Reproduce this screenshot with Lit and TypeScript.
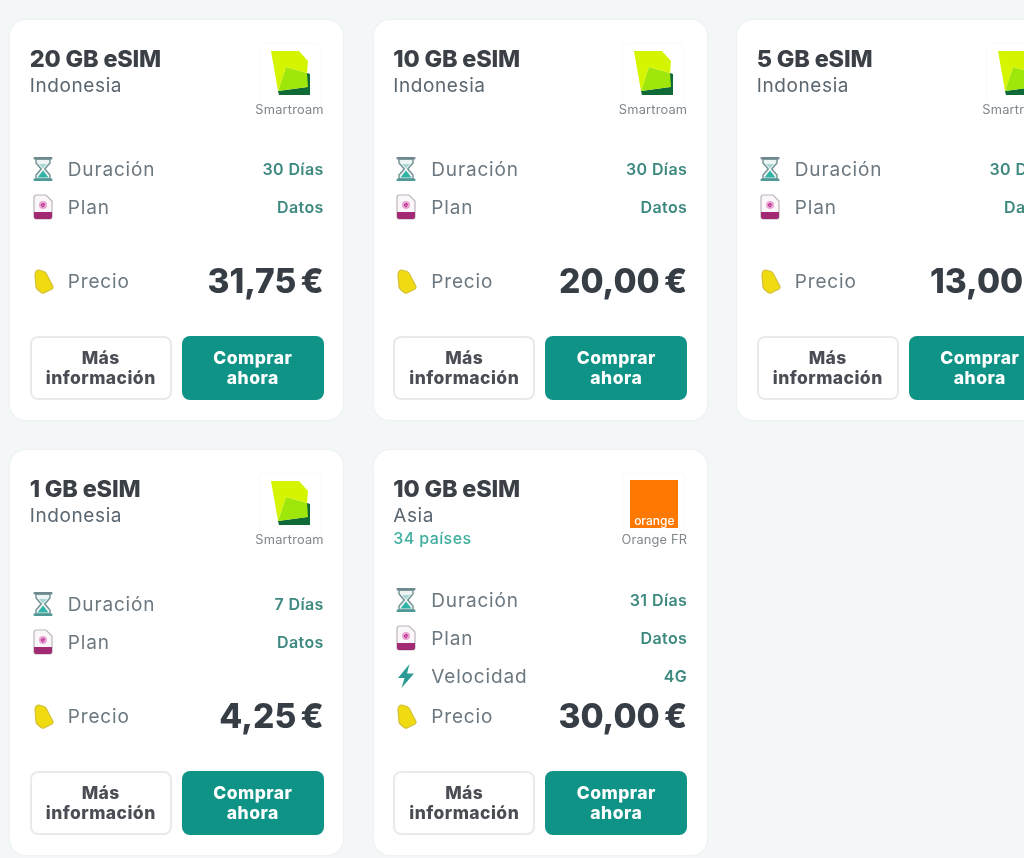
import { LitElement, html, css, svg } from 'lit';
import { customElement } from 'lit/decorators.js';

interface Plan {
  title: string;
  region: string;
  countries?: string;
  brand: 'smartroam' | 'orange';
  days: string;
  speed?: string;
  price: string;
}

const PLANS: Plan[] = [
  { title: '20 GB eSIM', region: 'Indonesia', brand: 'smartroam', days: '30 Días', price: '31,75 €' },
  { title: '10 GB eSIM', region: 'Indonesia', brand: 'smartroam', days: '30 Días', price: '20,00 €' },
  { title: '5 GB eSIM', region: 'Indonesia', brand: 'smartroam', days: '30 Días', price: '13,00 €' },
  { title: '1 GB eSIM', region: 'Indonesia', brand: 'smartroam', days: '7 Días', price: '4,25 €' },
  { title: '10 GB eSIM', region: 'Asia', countries: '34 países', brand: 'orange', days: '31 Días', speed: '4G', price: '30,00 €' },
];

const hourglass = svg`<svg width="24" height="28" viewBox="0 0 24 28">
  <path d="M5 4h14v4l-5.2 6 5.2 6v4H5v-4l5.2-6L5 8z" fill="#eef4f4" stroke="#6f8f92" stroke-width="1.4"/>
  <path d="M8 9h8l-4 4.5z" fill="#a9d8d4"/>
  <path d="M12 15.5l5.5 7h-11z" fill="#2fb3a6"/>
  <rect x="2.5" y="2" width="19" height="2.6" rx="1" fill="#6f8a8e"/>
  <rect x="2.5" y="23.4" width="19" height="2.6" rx="1" fill="#4f9a96"/>
</svg>`;

const simCard = svg`<svg width="20" height="26" viewBox="0 0 20 26">
  <path d="M3.5 1H13l6 6v15.500A2.500 2.500 0 0 1 16.500 25h-13A2.500 2.500 0 0 1 1 22.500v-19A2.500 2.500 0 0 1 3.500 1z" fill="#fbf6f9" stroke="#b9b6bb" stroke-width="1.200"/>
  <path d="M1 18h18v4.500a2.500 2.500 0 0 1-2.500 2.500h-13A2.500 2.500 0 0 1 1 22.500z" fill="#a12a72"/>
  <circle cx="10" cy="11" r="4" fill="#e9a6d3"/>
  <path d="M8.400 11h3.200a1.600 1.600 0 1 0-.5 1.300" fill="none" stroke="#b5248a" stroke-width="1"/>
</svg>`;

const bolt = svg`<svg width="20" height="26" viewBox="0 0 20 26">
  <path d="M13.500 1L2 15h6.500L5.500 25 18 10.500h-7z" fill="#2a9c95"/>
</svg>`;

const tag = svg`<svg width="24" height="28" viewBox="0 0 24 28">
  <path d="M4 8Q4 3 8 3L13 4.500Q14.500 5 15.500 7L22 19.500Q22.500 21 21 22L13 26Q11.500 26.500 10 25.500L6.500 22.500Q5.500 21.500 5 20z" fill="#f0da10" stroke="#d3c03c" stroke-width="1.200" stroke-linejoin="round"/>
</svg>`;

const smartroamLogo = svg`<svg width="60" height="60" viewBox="0 0 60 60">
  <path d="M47 29l3 1v21H19l-1-4 29-4z" fill="#0f6a38"/>
  <path d="M26 23l21 6 1 14-30 4z" fill="#9fe60a"/>
  <path d="M11 7h28l9 10-1 12-21-6-8 24z" fill="#d5f400"/>
</svg>`;

@customElement('app-root')
export class AppRoot extends LitElement {
  static styles = css`
    :host {
      display: block;
      width: 1024px;
      height: 858px;
      overflow: hidden;
      background: #f4f7f8;
      font-family: Inter, 'Liberation Sans', sans-serif;
    }

    .grid {
      display: grid;
      grid-template-columns: repeat(3, 333px);
      grid-template-rows: 400px 405px;
      gap: 30px 30.5px;
      padding: 20px 0 20px 10px;
      width: 1100px;
      filter: blur(0.6px);
    }

    .card {
      display: flex;
      flex-direction: column;
      padding: 20px 19.25px 20px 19.75px;
      background: #fff;
      border-radius: 16px;
      box-shadow: 0 0 3px rgba(60, 80, 90, 0.08);
    }

    .head {
      display: flex;
      justify-content: space-between;
      align-items: flex-start;
    }

    .title {
      margin: 5px 0 0;
      color: #3b4046;
      font-size: 23.5px;
      line-height: 27px;
      font-weight: 800;
      letter-spacing: -0.2px;
    }

    .region {
      margin-top: 1px;
      color: #5a6670;
      font-size: 19px;
      line-height: 26px;
      letter-spacing: 0.6px;
    }

    .countries {
      color: #3fae9f;
      font-size: 16px;
      line-height: 19px;
      font-weight: 500;
      letter-spacing: 0.4px;
    }

    .brand {
      display: flex;
      flex-direction: column;
      align-items: center;
      margin-top: 4px;
    }

    .logo {
      display: flex;
      align-items: center;
      justify-content: center;
      width: 60px;
      height: 60px;
      border-radius: 4px;
      box-shadow: 0 0 2px rgba(60, 80, 90, 0.1);
    }

    .orange-mark {
      display: flex;
      align-items: flex-end;
      justify-content: center;
      box-sizing: border-box;
      width: 48px;
      height: 48px;
      padding-bottom: 1px;
      background: #ff7900;
      color: #fff;
      font-size: 12px;
      line-height: 13px;
      font-weight: 500;
    }

    .brand-name {
      color: #7f878c;
      font-size: 12.8px;
      line-height: 12px;
      letter-spacing: 0.2px;
      white-space: nowrap;
    }

    .specs {
      margin-top: auto;
    }

    .row {
      display: flex;
      align-items: center;
      justify-content: space-between;
      height: 38px;
    }

    .spacer {
      height: 34px;
    }

    .label {
      display: flex;
      align-items: center;
      gap: 12px;
      color: #6c7880;
      font-size: 19px;
      letter-spacing: 0.85px;
    }

    .icon {
      display: flex;
      justify-content: center;
      width: 26px;
    }

    .value {
      color: #3d887f;
      font-size: 16px;
      font-weight: 600;
      letter-spacing: 0.4px;
    }

    .price-row {
      display: flex;
      align-items: center;
      justify-content: space-between;
      height: 40px;
      margin-top: 1px;
    }

    .price {
      color: #363d45;
      font-size: 33.5px;
      font-weight: 800;
      letter-spacing: 0;
      word-spacing: -3px;
      white-space: nowrap;
    }

    .actions {
      display: grid;
      grid-template-columns: 142px 142px;
      justify-content: space-between;
      margin-top: 35px;
    }

    .btn {
      box-sizing: border-box;
      height: 64px;
      padding: 0 12px;
      border-radius: 8px;
      font-family: inherit;
      font-size: 17.5px;
      line-height: 20px;
      font-weight: 800;
      letter-spacing: 0.45px;
    }

    .btn-ghost {
      padding: 0;
      background: #fff;
      border: 2px solid #e8eaec;
      color: #4a4e54;
    }

    .btn-buy {
      background: #0e9386;
      border: 0;
      color: #fff;
    }
  `;

  renderCard(plan: Plan) {
    return html`
      <article class="card">
        <div class="head">
          <div>
            <h2 class="title">${plan.title}</h2>
            <div class="region">${plan.region}</div>
            ${plan.countries ? html`<div class="countries">${plan.countries}</div>` : ''}
          </div>
          <div class="brand">
            <div class="logo">
              ${plan.brand === 'smartroam' ? smartroamLogo : html`<div class="orange-mark">orange</div>`}
            </div>
            <div class="brand-name">${plan.brand === 'smartroam' ? 'Smartroam' : 'Orange FR'}</div>
          </div>
        </div>
        <div class="specs">
          <div class="row">
            <span class="label"><span class="icon">${hourglass}</span>Duración</span>
            <span class="value">${plan.days}</span>
          </div>
          <div class="row">
            <span class="label"><span class="icon">${simCard}</span>Plan</span>
            <span class="value">Datos</span>
          </div>
          ${plan.speed
            ? html`<div class="row">
                <span class="label"><span class="icon">${bolt}</span>Velocidad</span>
                <span class="value">${plan.speed}</span>
              </div>`
            : html`<div class="spacer"></div>`}
        </div>
        <div class="price-row">
          <span class="label"><span class="icon">${tag}</span>Precio</span>
          <span class="price">${plan.price}</span>
        </div>
        <div class="actions">
          <button class="btn btn-ghost">Más información</button>
          <button class="btn btn-buy">Comprar ahora</button>
        </div>
      </article>
    `;
  }

  render() {
    return html`<div class="grid">${PLANS.map((plan) => this.renderCard(plan))}</div>`;
  }
}
